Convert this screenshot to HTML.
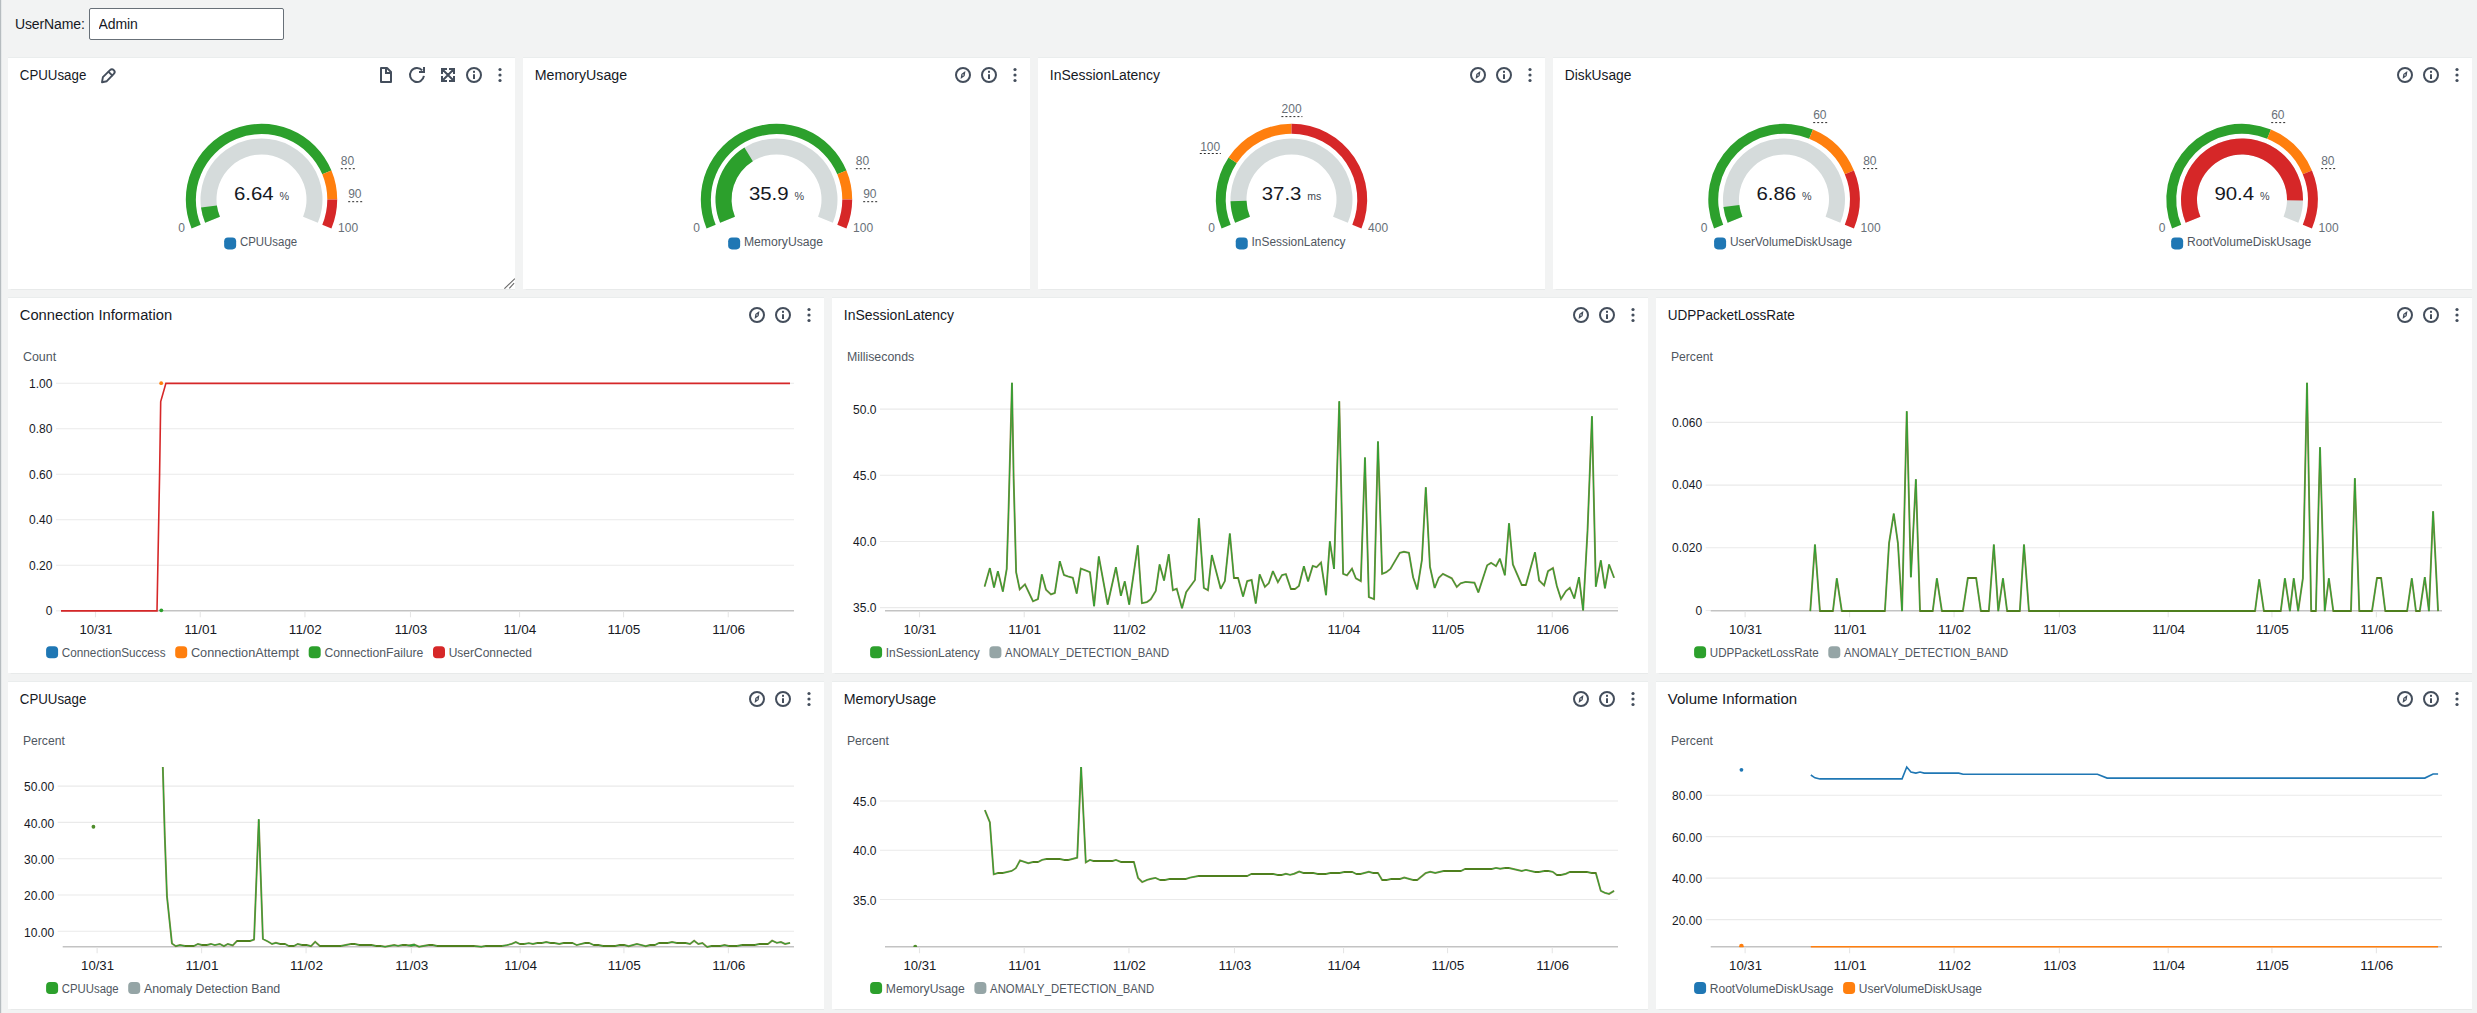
<!DOCTYPE html>
<html lang="en">
<head>
<meta charset="utf-8">
<title>Dashboard</title>
<style>
html,body{margin:0;padding:0}
body{width:2477px;height:1013px;overflow:hidden;position:relative;background:#f2f3f3;font-family:"Liberation Sans", Arial, sans-serif;color:#16191f}
.edge{position:absolute;left:0;top:0;width:2px;height:1013px;background:linear-gradient(90deg,#b3b9bd 0,#b9bfc2 1px,#e3e6e7 1px,#e9ebec 2px)}
.vars{position:absolute;left:0;top:0;height:48px;width:100%}
.vars label{position:absolute;left:15px;top:15px;font-size:14px;line-height:18px;letter-spacing:-0.12px;color:#16191f}
.vars input{position:absolute;left:89px;top:8px;width:195px;height:32px;box-sizing:border-box;border:1px solid #687078;border-radius:2px;background:#fff;
 padding:0 0 0 8.5px;font:14px "Liberation Sans", Arial, sans-serif;letter-spacing:-0.1px;color:#16191f;outline:none}
.panel{position:absolute;box-sizing:content-box;background:#fff;border-top:1px solid #eaeded;box-shadow:0 1px 1px -0.5px rgba(0,28,36,.04)}
.pv{position:absolute;left:0;top:0;display:block}
svg text{font-family:"Liberation Sans", Arial, sans-serif;white-space:pre}
</style>
</head>
<body>
<div class="edge"></div>
<header class="vars"><label for="un">UserName:</label><input id="un" type="text" value="Admin" spellcheck="false"></header>
<main>
<section class="panel" style="left:8px;top:57px;width:507px;height:231px"><svg class="pv" width="507" height="231" viewBox="8 58 507 231"><text x="19.8" y="80" font-size="14" fill="#16191f" textLength="66.5" lengthAdjust="spacingAndGlyphs">CPUUsage</text><g stroke="#444e5c" fill="none" stroke-width="1.9" stroke-linejoin="round" stroke-linecap="round"><path d="M102 82.2L102.9 77.2L110 70.1A2.6 2.6 0 0 1 113.8 73.9L106.8 81.2Z"/><path d="M108.6 71.8L112.2 75.4"/></g><g stroke="#444e5c" fill="none" stroke-width="2" stroke-linejoin="round"><path d="M381 68H387L391 72V82H381Z"/><path d="M386 68V73H391" stroke-linejoin="miter"/></g><g stroke="#444e5c" fill="none" stroke-width="2"><path d="M423.93 75.97A7 7 0 1 1 422.2 70.32"/><path d="M424 67V72H419" stroke-linejoin="miter"/></g><path d="M447 69H442V74M442 69L448 75M449 69H454V74M454 69L448 75M449 81H454V76M454 81L448 75M447 81H442V76M442 81L448 75" stroke="#444e5c" fill="none" stroke-width="2" stroke-linejoin="miter"/><g stroke="#444e5c" fill="none" stroke-width="2"><circle cx="474" cy="75" r="7"/><path d="M474 74.2V79" /></g><rect x="473" y="70.8" width="2" height="2" fill="#444e5c"/><circle cx="500" cy="69.5" r="1.6" fill="#444e5c"/><circle cx="500" cy="75" r="1.6" fill="#444e5c"/><circle cx="500" cy="80.5" r="1.6" fill="#444e5c"/><path d="M504.4 288.7L514.9 278.6M509.3 288.4L514.1 283.2" stroke="#6a6a6a" stroke-width="1.1" fill="none"/><path d="M191.56 228.47A75.7 75.7 0 0 1 331.44 170.53L322.29 174.32A65.8 65.8 0 0 0 200.71 224.68Z" fill="#2ca02c"/><path d="M331.44 170.53A75.7 75.7 0 0 1 337.2 199.5L327.3 199.5A65.8 65.8 0 0 0 322.29 174.32Z" fill="#ff7f0e"/><path d="M337.2 199.5A75.7 75.7 0 0 1 331.44 228.47L322.29 224.68A65.8 65.8 0 0 0 327.3 199.5Z" fill="#d62728"/><path d="M205.14 222.84A61 61 0 1 1 317.86 222.84L303.07 216.72A45 45 0 1 0 219.93 216.72Z" fill="#d5dbdb"/><path d="M205.14 222.84A61 61 0 0 1 201.03 207.53L216.89 205.42A45 45 0 0 0 219.93 216.72Z" fill="#2ca02c"/><text x="233.95" y="199.7" font-size="19" fill="#16191f" textLength="39.7" lengthAdjust="spacingAndGlyphs">6.64</text><text x="279.45" y="199.7" font-size="11" fill="#414750" textLength="9.6" lengthAdjust="spacingAndGlyphs">%</text><text x="185" y="232" font-size="12" fill="#687078" text-anchor="end">0</text><text x="338.1" y="232" font-size="12" fill="#687078">100</text><text x="340.8" y="164.8" font-size="12" fill="#687078">80</text><path d="M340.8 168.7h14.2" stroke="#2a2a2a" stroke-width="1" stroke-dasharray="2 2" fill="none"/><text x="348.2" y="197.8" font-size="12" fill="#687078">90</text><path d="M348.2 201.7h14.2" stroke="#2a2a2a" stroke-width="1" stroke-dasharray="2 2" fill="none"/><rect x="224.15" y="237.4" width="12" height="12" rx="3.8" fill="#1f77b4"/><text x="239.95" y="245.7" font-size="12" fill="#50575f" textLength="57.2" lengthAdjust="spacingAndGlyphs">CPUUsage</text></svg></section>
<section class="panel" style="left:523px;top:57px;width:507px;height:231px"><svg class="pv" width="507" height="231" viewBox="523 58 507 231"><text x="534.8" y="80" font-size="14" fill="#16191f" textLength="92.3" lengthAdjust="spacingAndGlyphs">MemoryUsage</text><g stroke="#444e5c" fill="none" stroke-width="2"><circle cx="963" cy="75" r="7"/></g><path d="M965.4 71.1L964.7 76L960.6 78.9L961.3 74Z" fill="#444e5c" fill-rule="evenodd"/><circle cx="963" cy="75" r="0.8" fill="#e8eaec"/><g stroke="#444e5c" fill="none" stroke-width="2"><circle cx="989" cy="75" r="7"/><path d="M989 74.2V79" /></g><rect x="988" y="70.8" width="2" height="2" fill="#444e5c"/><circle cx="1015" cy="69.5" r="1.6" fill="#444e5c"/><circle cx="1015" cy="75" r="1.6" fill="#444e5c"/><circle cx="1015" cy="80.5" r="1.6" fill="#444e5c"/><path d="M706.56 228.47A75.7 75.7 0 0 1 846.44 170.53L837.29 174.32A65.8 65.8 0 0 0 715.71 224.68Z" fill="#2ca02c"/><path d="M846.44 170.53A75.7 75.7 0 0 1 852.2 199.5L842.3 199.5A65.8 65.8 0 0 0 837.29 174.32Z" fill="#ff7f0e"/><path d="M852.2 199.5A75.7 75.7 0 0 1 846.44 228.47L837.29 224.68A65.8 65.8 0 0 0 842.3 199.5Z" fill="#d62728"/><path d="M720.14 222.84A61 61 0 1 1 832.86 222.84L818.07 216.72A45 45 0 1 0 734.93 216.72Z" fill="#d5dbdb"/><path d="M720.14 222.84A61 61 0 0 1 744.42 147.61L752.84 161.22A45 45 0 0 0 734.93 216.72Z" fill="#2ca02c"/><text x="748.95" y="199.7" font-size="19" fill="#16191f" textLength="39.7" lengthAdjust="spacingAndGlyphs">35.9</text><text x="794.45" y="199.7" font-size="11" fill="#414750" textLength="9.6" lengthAdjust="spacingAndGlyphs">%</text><text x="700" y="232" font-size="12" fill="#687078" text-anchor="end">0</text><text x="853.1" y="232" font-size="12" fill="#687078">100</text><text x="855.8" y="164.8" font-size="12" fill="#687078">80</text><path d="M855.8 168.7h14.2" stroke="#2a2a2a" stroke-width="1" stroke-dasharray="2 2" fill="none"/><text x="863.2" y="197.8" font-size="12" fill="#687078">90</text><path d="M863.2 201.7h14.2" stroke="#2a2a2a" stroke-width="1" stroke-dasharray="2 2" fill="none"/><rect x="728.15" y="237.4" width="12" height="12" rx="3.8" fill="#1f77b4"/><text x="743.95" y="245.7" font-size="12" fill="#50575f" textLength="79.2" lengthAdjust="spacingAndGlyphs">MemoryUsage</text></svg></section>
<section class="panel" style="left:1038px;top:57px;width:507px;height:231px"><svg class="pv" width="507" height="231" viewBox="1038 58 507 231"><text x="1049.8" y="80" font-size="14" fill="#16191f" textLength="110.3" lengthAdjust="spacingAndGlyphs">InSessionLatency</text><g stroke="#444e5c" fill="none" stroke-width="2"><circle cx="1478" cy="75" r="7"/></g><path d="M1480.4 71.1L1479.7 76L1475.6 78.9L1476.3 74Z" fill="#444e5c" fill-rule="evenodd"/><circle cx="1478" cy="75" r="0.8" fill="#e8eaec"/><g stroke="#444e5c" fill="none" stroke-width="2"><circle cx="1504" cy="75" r="7"/><path d="M1504 74.2V79" /></g><rect x="1503" y="70.8" width="2" height="2" fill="#444e5c"/><circle cx="1530" cy="69.5" r="1.6" fill="#444e5c"/><circle cx="1530" cy="75" r="1.6" fill="#444e5c"/><circle cx="1530" cy="80.5" r="1.6" fill="#444e5c"/><path d="M1221.56 228.47A75.7 75.7 0 0 1 1228.56 157.44L1236.79 162.94A65.8 65.8 0 0 0 1230.71 224.68Z" fill="#2ca02c"/><path d="M1228.56 157.44A75.7 75.7 0 0 1 1291.5 123.8L1291.5 133.7A65.8 65.8 0 0 0 1236.79 162.94Z" fill="#ff7f0e"/><path d="M1291.5 123.8A75.7 75.7 0 0 1 1361.44 228.47L1352.29 224.68A65.8 65.8 0 0 0 1291.5 133.7Z" fill="#d62728"/><path d="M1235.14 222.84A61 61 0 1 1 1347.86 222.84L1333.07 216.72A45 45 0 1 0 1249.93 216.72Z" fill="#d5dbdb"/><path d="M1235.14 222.84A61 61 0 0 1 1230.52 201.13L1246.52 200.7A45 45 0 0 0 1249.93 216.72Z" fill="#2ca02c"/><text x="1261.75" y="199.7" font-size="19" fill="#16191f" textLength="39.7" lengthAdjust="spacingAndGlyphs">37.3</text><text x="1307.25" y="199.7" font-size="11" fill="#414750" textLength="14" lengthAdjust="spacingAndGlyphs">ms</text><text x="1215" y="232" font-size="12" fill="#687078" text-anchor="end">0</text><text x="1368.1" y="232" font-size="12" fill="#687078">400</text><text x="1220.2" y="150.6" font-size="12" fill="#687078" text-anchor="end">100</text><path d="M1199.8 153.5h21" stroke="#2a2a2a" stroke-width="1" stroke-dasharray="2 2" fill="none"/><text x="1291.6" y="112.7" font-size="12" fill="#687078" text-anchor="middle">200</text><path d="M1281.4 116.6h21" stroke="#2a2a2a" stroke-width="1" stroke-dasharray="2 2" fill="none"/><rect x="1235.75" y="237.4" width="12" height="12" rx="3.8" fill="#1f77b4"/><text x="1251.55" y="245.7" font-size="12" fill="#50575f" textLength="94" lengthAdjust="spacingAndGlyphs">InSessionLatency</text></svg></section>
<section class="panel" style="left:1553px;top:57px;width:919px;height:231px"><svg class="pv" width="919" height="231" viewBox="1553 58 919 231"><text x="1564.8" y="80" font-size="14" fill="#16191f" textLength="66.6" lengthAdjust="spacingAndGlyphs">DiskUsage</text><g stroke="#444e5c" fill="none" stroke-width="2"><circle cx="2405" cy="75" r="7"/></g><path d="M2407.4 71.1L2406.7 76L2402.6 78.9L2403.3 74Z" fill="#444e5c" fill-rule="evenodd"/><circle cx="2405" cy="75" r="0.8" fill="#e8eaec"/><g stroke="#444e5c" fill="none" stroke-width="2"><circle cx="2431" cy="75" r="7"/><path d="M2431 74.2V79" /></g><rect x="2430" y="70.8" width="2" height="2" fill="#444e5c"/><circle cx="2457" cy="69.5" r="1.6" fill="#444e5c"/><circle cx="2457" cy="75" r="1.6" fill="#444e5c"/><circle cx="2457" cy="80.5" r="1.6" fill="#444e5c"/><path d="M1714.06 228.47A75.7 75.7 0 0 1 1812.97 129.56L1809.18 138.71A65.8 65.8 0 0 0 1723.21 224.68Z" fill="#2ca02c"/><path d="M1812.97 129.56A75.7 75.7 0 0 1 1853.94 170.53L1844.79 174.32A65.8 65.8 0 0 0 1809.18 138.71Z" fill="#ff7f0e"/><path d="M1853.94 170.53A75.7 75.7 0 0 1 1853.94 228.47L1844.79 224.68A65.8 65.8 0 0 0 1844.79 174.32Z" fill="#d62728"/><path d="M1727.64 222.84A61 61 0 1 1 1840.36 222.84L1825.57 216.72A45 45 0 1 0 1742.43 216.72Z" fill="#d5dbdb"/><path d="M1727.64 222.84A61 61 0 0 1 1723.46 207L1739.34 205.03A45 45 0 0 0 1742.43 216.72Z" fill="#2ca02c"/><text x="1756.45" y="199.7" font-size="19" fill="#16191f" textLength="39.7" lengthAdjust="spacingAndGlyphs">6.86</text><text x="1801.95" y="199.7" font-size="11" fill="#414750" textLength="9.6" lengthAdjust="spacingAndGlyphs">%</text><text x="1707.5" y="232" font-size="12" fill="#687078" text-anchor="end">0</text><text x="1860.6" y="232" font-size="12" fill="#687078">100</text><text x="1813.2" y="118.7" font-size="12" fill="#687078">60</text><path d="M1813.2 122.6h14.2" stroke="#2a2a2a" stroke-width="1" stroke-dasharray="2 2" fill="none"/><text x="1863.2" y="164.7" font-size="12" fill="#687078">80</text><path d="M1863.2 168.6h14.2" stroke="#2a2a2a" stroke-width="1" stroke-dasharray="2 2" fill="none"/><rect x="1714.1" y="237.4" width="12" height="12" rx="3.8" fill="#1f77b4"/><text x="1729.9" y="245.7" font-size="12" fill="#50575f" textLength="122.3" lengthAdjust="spacingAndGlyphs">UserVolumeDiskUsage</text><path d="M2172.06 228.47A75.7 75.7 0 0 1 2270.97 129.56L2267.18 138.71A65.8 65.8 0 0 0 2181.21 224.68Z" fill="#2ca02c"/><path d="M2270.97 129.56A75.7 75.7 0 0 1 2311.94 170.53L2302.79 174.32A65.8 65.8 0 0 0 2267.18 138.71Z" fill="#ff7f0e"/><path d="M2311.94 170.53A75.7 75.7 0 0 1 2311.94 228.47L2302.79 224.68A65.8 65.8 0 0 0 2302.79 174.32Z" fill="#d62728"/><path d="M2185.64 222.84A61 61 0 1 1 2298.36 222.84L2283.57 216.72A45 45 0 1 0 2200.43 216.72Z" fill="#d5dbdb"/><path d="M2185.64 222.84A61 61 0 1 1 2302.99 200.46L2286.99 200.21A45 45 0 1 0 2200.43 216.72Z" fill="#d62728"/><text x="2214.45" y="199.7" font-size="19" fill="#16191f" textLength="39.7" lengthAdjust="spacingAndGlyphs">90.4</text><text x="2259.95" y="199.7" font-size="11" fill="#414750" textLength="9.6" lengthAdjust="spacingAndGlyphs">%</text><text x="2165.5" y="232" font-size="12" fill="#687078" text-anchor="end">0</text><text x="2318.6" y="232" font-size="12" fill="#687078">100</text><text x="2271.2" y="118.7" font-size="12" fill="#687078">60</text><path d="M2271.2 122.6h14.2" stroke="#2a2a2a" stroke-width="1" stroke-dasharray="2 2" fill="none"/><text x="2321.2" y="164.7" font-size="12" fill="#687078">80</text><path d="M2321.2 168.6h14.2" stroke="#2a2a2a" stroke-width="1" stroke-dasharray="2 2" fill="none"/><rect x="2171.15" y="237.4" width="12" height="12" rx="3.8" fill="#1f77b4"/><text x="2186.95" y="245.7" font-size="12" fill="#50575f" textLength="124.2" lengthAdjust="spacingAndGlyphs">RootVolumeDiskUsage</text></svg></section>
<section class="panel" style="left:8px;top:297px;width:816px;height:375px"><svg class="pv" width="816" height="375" viewBox="8 298 816 375"><text x="19.8" y="320" font-size="14" fill="#16191f" textLength="152.3" lengthAdjust="spacingAndGlyphs">Connection Information</text><g stroke="#444e5c" fill="none" stroke-width="2"><circle cx="757" cy="315" r="7"/></g><path d="M759.4 311.1L758.7 316L754.6 318.9L755.3 314Z" fill="#444e5c" fill-rule="evenodd"/><circle cx="757" cy="315" r="0.8" fill="#e8eaec"/><g stroke="#444e5c" fill="none" stroke-width="2"><circle cx="783" cy="315" r="7"/><path d="M783 314.2V319" /></g><rect x="782" y="310.8" width="2" height="2" fill="#444e5c"/><circle cx="809" cy="309.5" r="1.6" fill="#444e5c"/><circle cx="809" cy="315" r="1.6" fill="#444e5c"/><circle cx="809" cy="320.5" r="1.6" fill="#444e5c"/><text x="22.9" y="361" font-size="12" fill="#50575f" textLength="33.3" lengthAdjust="spacingAndGlyphs">Count</text><path d="M56 383.3H794" stroke="#eaeaea" stroke-width="1.1"/><text x="52.4" y="387.6" font-size="12" fill="#16191f" text-anchor="end">1.00</text><path d="M56 428.8H794" stroke="#eaeaea" stroke-width="1.1"/><text x="52.4" y="433.1" font-size="12" fill="#16191f" text-anchor="end">0.80</text><path d="M56 474.3H794" stroke="#eaeaea" stroke-width="1.1"/><text x="52.4" y="478.6" font-size="12" fill="#16191f" text-anchor="end">0.60</text><path d="M56 519.8H794" stroke="#eaeaea" stroke-width="1.1"/><text x="52.4" y="524.1" font-size="12" fill="#16191f" text-anchor="end">0.40</text><path d="M56 565.3H794" stroke="#eaeaea" stroke-width="1.1"/><text x="52.4" y="569.6" font-size="12" fill="#16191f" text-anchor="end">0.20</text><path d="M56 610.8H61" stroke="#eaeaea" stroke-width="1.1"/><text x="52.4" y="615.1" font-size="12" fill="#16191f" text-anchor="end">0</text><path d="M61 610.8H794" stroke="#c3c3c3" stroke-width="1.6"/><path d="M95.51 611.6V617.3" stroke="#e6e6e6" stroke-width="1.1"/><text x="95.91" y="633.9" font-size="12" fill="#16191f" text-anchor="middle" textLength="32.9" lengthAdjust="spacingAndGlyphs">10/31</text><path d="M200.23 611.6V617.3" stroke="#e6e6e6" stroke-width="1.1"/><text x="200.63" y="633.9" font-size="12" fill="#16191f" text-anchor="middle" textLength="32.9" lengthAdjust="spacingAndGlyphs">11/01</text><path d="M304.94 611.6V617.3" stroke="#e6e6e6" stroke-width="1.1"/><text x="305.34" y="633.9" font-size="12" fill="#16191f" text-anchor="middle" textLength="32.9" lengthAdjust="spacingAndGlyphs">11/02</text><path d="M410.48 611.6V617.3" stroke="#e6e6e6" stroke-width="1.1"/><text x="410.88" y="633.9" font-size="12" fill="#16191f" text-anchor="middle" textLength="32.9" lengthAdjust="spacingAndGlyphs">11/03</text><path d="M519.56 611.6V617.3" stroke="#e6e6e6" stroke-width="1.1"/><text x="519.96" y="633.9" font-size="12" fill="#16191f" text-anchor="middle" textLength="32.9" lengthAdjust="spacingAndGlyphs">11/04</text><path d="M623.53 611.6V617.3" stroke="#e6e6e6" stroke-width="1.1"/><text x="623.93" y="633.9" font-size="12" fill="#16191f" text-anchor="middle" textLength="32.9" lengthAdjust="spacingAndGlyphs">11/05</text><path d="M728.25 611.6V617.3" stroke="#e6e6e6" stroke-width="1.1"/><text x="728.65" y="633.9" font-size="12" fill="#16191f" text-anchor="middle" textLength="32.9" lengthAdjust="spacingAndGlyphs">11/06</text><path d="M61 610.9L157 610.9L159.6 474L160.7 401.5L165.9 383.4L790 383.4" fill="none" stroke="#d62728" stroke-width="1.6" stroke-linejoin="miter" stroke-miterlimit="2.5"/><circle cx="161.2" cy="383.2" r="1.9" fill="#ff7f0e"/><circle cx="161.3" cy="610.3" r="1.9" fill="#2ca02c"/><rect x="46.1" y="646.2" width="12" height="12" rx="3.8" fill="#1f77b4"/><text x="61.8" y="656.8" font-size="12" fill="#50575f" textLength="103.8" lengthAdjust="spacingAndGlyphs">ConnectionSuccess</text><rect x="175.2" y="646.2" width="12" height="12" rx="3.8" fill="#ff7f0e"/><text x="190.9" y="656.8" font-size="12" fill="#50575f" textLength="108.2" lengthAdjust="spacingAndGlyphs">ConnectionAttempt</text><rect x="308.7" y="646.2" width="12" height="12" rx="3.8" fill="#2ca02c"/><text x="324.4" y="656.8" font-size="12" fill="#50575f" textLength="99" lengthAdjust="spacingAndGlyphs">ConnectionFailure</text><rect x="433" y="646.2" width="12" height="12" rx="3.8" fill="#d62728"/><text x="448.7" y="656.8" font-size="12" fill="#50575f" textLength="83.3" lengthAdjust="spacingAndGlyphs">UserConnected</text></svg></section>
<section class="panel" style="left:832px;top:297px;width:816px;height:375px"><svg class="pv" width="816" height="375" viewBox="832 298 816 375"><text x="843.8" y="320" font-size="14" fill="#16191f" textLength="110.3" lengthAdjust="spacingAndGlyphs">InSessionLatency</text><g stroke="#444e5c" fill="none" stroke-width="2"><circle cx="1581" cy="315" r="7"/></g><path d="M1583.4 311.1L1582.7 316L1578.6 318.9L1579.3 314Z" fill="#444e5c" fill-rule="evenodd"/><circle cx="1581" cy="315" r="0.8" fill="#e8eaec"/><g stroke="#444e5c" fill="none" stroke-width="2"><circle cx="1607" cy="315" r="7"/><path d="M1607 314.2V319" /></g><rect x="1606" y="310.8" width="2" height="2" fill="#444e5c"/><circle cx="1633" cy="309.5" r="1.6" fill="#444e5c"/><circle cx="1633" cy="315" r="1.6" fill="#444e5c"/><circle cx="1633" cy="320.5" r="1.6" fill="#444e5c"/><text x="846.9" y="361" font-size="12" fill="#50575f" textLength="67.3" lengthAdjust="spacingAndGlyphs">Milliseconds</text><path d="M880 409.1H1618" stroke="#eaeaea" stroke-width="1.1"/><text x="876.4" y="413.9" font-size="12" fill="#16191f" text-anchor="end">50.0</text><path d="M880 475.3H1618" stroke="#eaeaea" stroke-width="1.1"/><text x="876.4" y="480.1" font-size="12" fill="#16191f" text-anchor="end">45.0</text><path d="M880 541.5H1618" stroke="#eaeaea" stroke-width="1.1"/><text x="876.4" y="546.3" font-size="12" fill="#16191f" text-anchor="end">40.0</text><path d="M880 607.6H1618" stroke="#eaeaea" stroke-width="1.1"/><text x="876.4" y="612.4" font-size="12" fill="#16191f" text-anchor="end">35.0</text><path d="M885 610.8H1618" stroke="#c3c3c3" stroke-width="1.6"/><path d="M919.51 611.6V617.3" stroke="#e6e6e6" stroke-width="1.1"/><text x="919.91" y="633.9" font-size="12" fill="#16191f" text-anchor="middle" textLength="32.9" lengthAdjust="spacingAndGlyphs">10/31</text><path d="M1024.23 611.6V617.3" stroke="#e6e6e6" stroke-width="1.1"/><text x="1024.63" y="633.9" font-size="12" fill="#16191f" text-anchor="middle" textLength="32.9" lengthAdjust="spacingAndGlyphs">11/01</text><path d="M1128.94 611.6V617.3" stroke="#e6e6e6" stroke-width="1.1"/><text x="1129.34" y="633.9" font-size="12" fill="#16191f" text-anchor="middle" textLength="32.9" lengthAdjust="spacingAndGlyphs">11/02</text><path d="M1234.48 611.6V617.3" stroke="#e6e6e6" stroke-width="1.1"/><text x="1234.88" y="633.9" font-size="12" fill="#16191f" text-anchor="middle" textLength="32.9" lengthAdjust="spacingAndGlyphs">11/03</text><path d="M1343.56 611.6V617.3" stroke="#e6e6e6" stroke-width="1.1"/><text x="1343.96" y="633.9" font-size="12" fill="#16191f" text-anchor="middle" textLength="32.9" lengthAdjust="spacingAndGlyphs">11/04</text><path d="M1447.53 611.6V617.3" stroke="#e6e6e6" stroke-width="1.1"/><text x="1447.93" y="633.9" font-size="12" fill="#16191f" text-anchor="middle" textLength="32.9" lengthAdjust="spacingAndGlyphs">11/05</text><path d="M1552.25 611.6V617.3" stroke="#e6e6e6" stroke-width="1.1"/><text x="1552.65" y="633.9" font-size="12" fill="#16191f" text-anchor="middle" textLength="32.9" lengthAdjust="spacingAndGlyphs">11/06</text><path d="M984.61 586.61L989.86 568.08L994.01 587.44L997.88 571.13L1002.86 591.58L1006.73 568.91L1008.39 516.94L1011.98 382.85L1013.64 478.23L1016.13 572.23L1019.72 589.37L1024.97 584.4L1032.99 601.26L1037.97 599.05L1041.84 574.44L1045.99 589.65L1050.96 594.35L1054.83 592.97L1059.81 561.17L1063.96 575L1067.83 576.38L1072.8 577.76L1076.67 593.52L1080.82 568.64L1085.52 570.3L1089.94 572.23L1094.09 606.24L1098.79 556.47L1107.64 604.58L1115.93 567.26L1120.91 595.73L1124.78 581.36L1129.2 604.58L1137.77 545.41L1141.92 603.2L1146.9 602.09L1150.77 599.33L1155.74 591.03L1159.61 564.49L1164.04 580.53L1168.74 554.26L1172.88 590.2L1176.75 588.82L1182.01 608.17L1186.15 592.14L1195 579.97L1198.87 518.32L1203.85 587.99L1207.99 590.2L1211.87 555.09L1220.71 588.82L1224.86 581.08L1229.84 533.53L1233.94 578L1238.08 578L1243.06 596.56L1247.21 581.08L1251.63 579.97L1255.78 603.47L1259.65 574.44L1264.9 586.88L1268.77 583.29L1272.92 571.13L1277.89 582.18L1282.04 575L1285.91 574.17L1290.89 589L1295.03 589L1298.9 586.06L1303.88 566.15L1308.03 581.36L1312.73 565.87L1316.6 567.26L1321.02 562.56L1326 595.18L1329.87 541.27L1334.02 568.91L1339.27 401.38L1343.14 573.89L1347.01 575.27L1351.99 568.64L1355.86 578.31L1360.83 581.08L1364.98 457.5L1368.85 597.11L1374.1 599.05L1377.97 441.46L1382.12 573.89L1386.27 572.23L1390.42 568.91L1399.82 552.88L1403.96 551.77L1408.94 552.88L1413.09 577.21L1417.23 589.37L1421.93 559.79L1425.8 487.36L1429.95 566.7L1434.65 587.99L1438.8 577.76L1442.94 573.89L1451.79 578.31L1456.77 586.88L1460.64 583.29L1465.61 581.91L1474.46 582.74L1478.33 592.41L1487.18 565.32L1491.05 562.83L1496.03 566.15L1499.9 558.69L1504.87 575.27L1509.02 523.3L1512.89 564.49L1521.74 585L1525.88 585L1535.01 552.33L1539.15 580.53L1544.13 585.5L1548 571.13L1552.98 568.08L1556.85 586.06L1561 599.05L1565.97 591.03L1569.84 587.71L1574.27 598.5L1578.97 577.21L1583.11 610.38L1587.54 530.76L1591.96 416.3L1595.83 586.61L1600.81 560.34L1604.95 588.27L1609.1 564.49L1614.08 577.76" fill="none" stroke="#7d7426" stroke-width="1.9" stroke-linejoin="miter" stroke-miterlimit="2.5" stroke-opacity="0.85"/><path d="M984.61 586.61L989.86 568.08L994.01 587.44L997.88 571.13L1002.86 591.58L1006.73 568.91L1008.39 516.94L1011.98 382.85L1013.64 478.23L1016.13 572.23L1019.72 589.37L1024.97 584.4L1032.99 601.26L1037.97 599.05L1041.84 574.44L1045.99 589.65L1050.96 594.35L1054.83 592.97L1059.81 561.17L1063.96 575L1067.83 576.38L1072.8 577.76L1076.67 593.52L1080.82 568.64L1085.52 570.3L1089.94 572.23L1094.09 606.24L1098.79 556.47L1107.64 604.58L1115.93 567.26L1120.91 595.73L1124.78 581.36L1129.2 604.58L1137.77 545.41L1141.92 603.2L1146.9 602.09L1150.77 599.33L1155.74 591.03L1159.61 564.49L1164.04 580.53L1168.74 554.26L1172.88 590.2L1176.75 588.82L1182.01 608.17L1186.15 592.14L1195 579.97L1198.87 518.32L1203.85 587.99L1207.99 590.2L1211.87 555.09L1220.71 588.82L1224.86 581.08L1229.84 533.53L1233.94 578L1238.08 578L1243.06 596.56L1247.21 581.08L1251.63 579.97L1255.78 603.47L1259.65 574.44L1264.9 586.88L1268.77 583.29L1272.92 571.13L1277.89 582.18L1282.04 575L1285.91 574.17L1290.89 589L1295.03 589L1298.9 586.06L1303.88 566.15L1308.03 581.36L1312.73 565.87L1316.6 567.26L1321.02 562.56L1326 595.18L1329.87 541.27L1334.02 568.91L1339.27 401.38L1343.14 573.89L1347.01 575.27L1351.99 568.64L1355.86 578.31L1360.83 581.08L1364.98 457.5L1368.85 597.11L1374.1 599.05L1377.97 441.46L1382.12 573.89L1386.27 572.23L1390.42 568.91L1399.82 552.88L1403.96 551.77L1408.94 552.88L1413.09 577.21L1417.23 589.37L1421.93 559.79L1425.8 487.36L1429.95 566.7L1434.65 587.99L1438.8 577.76L1442.94 573.89L1451.79 578.31L1456.77 586.88L1460.64 583.29L1465.61 581.91L1474.46 582.74L1478.33 592.41L1487.18 565.32L1491.05 562.83L1496.03 566.15L1499.9 558.69L1504.87 575.27L1509.02 523.3L1512.89 564.49L1521.74 585L1525.88 585L1535.01 552.33L1539.15 580.53L1544.13 585.5L1548 571.13L1552.98 568.08L1556.85 586.06L1561 599.05L1565.97 591.03L1569.84 587.71L1574.27 598.5L1578.97 577.21L1583.11 610.38L1587.54 530.76L1591.96 416.3L1595.83 586.61L1600.81 560.34L1604.95 588.27L1609.1 564.49L1614.08 577.76" fill="none" stroke="#2ba335" stroke-width="1.0" stroke-linejoin="miter" stroke-miterlimit="2.5"/><path d="M1233.94 578L1238.08 578M1290.89 589L1295.03 589M1521.74 585L1525.88 585" fill="none" stroke="#4f7f1e" stroke-width="2" stroke-linejoin="round"/><rect x="870.1" y="646.2" width="12" height="12" rx="3.8" fill="#2ca02c"/><text x="885.8" y="656.8" font-size="12" fill="#50575f" textLength="94" lengthAdjust="spacingAndGlyphs">InSessionLatency</text><rect x="989.4" y="646.2" width="12" height="12" rx="3.8" fill="#95a5a6"/><text x="1005.1" y="656.8" font-size="12" fill="#50575f" textLength="164.1" lengthAdjust="spacingAndGlyphs">ANOMALY_DETECTION_BAND</text></svg></section>
<section class="panel" style="left:1656px;top:297px;width:816px;height:375px"><svg class="pv" width="816" height="375" viewBox="1656 298 816 375"><text x="1667.8" y="320" font-size="14" fill="#16191f" textLength="127.1" lengthAdjust="spacingAndGlyphs">UDPPacketLossRate</text><g stroke="#444e5c" fill="none" stroke-width="2"><circle cx="2405" cy="315" r="7"/></g><path d="M2407.4 311.1L2406.7 316L2402.6 318.9L2403.3 314Z" fill="#444e5c" fill-rule="evenodd"/><circle cx="2405" cy="315" r="0.8" fill="#e8eaec"/><g stroke="#444e5c" fill="none" stroke-width="2"><circle cx="2431" cy="315" r="7"/><path d="M2431 314.2V319" /></g><rect x="2430" y="310.8" width="2" height="2" fill="#444e5c"/><circle cx="2457" cy="309.5" r="1.6" fill="#444e5c"/><circle cx="2457" cy="315" r="1.6" fill="#444e5c"/><circle cx="2457" cy="320.5" r="1.6" fill="#444e5c"/><text x="1670.9" y="361" font-size="12" fill="#50575f" textLength="41.9" lengthAdjust="spacingAndGlyphs">Percent</text><path d="M1705.7 422.4H2442" stroke="#eaeaea" stroke-width="1.1"/><text x="1702.1" y="426.7" font-size="12" fill="#16191f" text-anchor="end">0.060</text><path d="M1705.7 485.1H2442" stroke="#eaeaea" stroke-width="1.1"/><text x="1702.1" y="489.4" font-size="12" fill="#16191f" text-anchor="end">0.040</text><path d="M1705.7 547.8H2442" stroke="#eaeaea" stroke-width="1.1"/><text x="1702.1" y="552.1" font-size="12" fill="#16191f" text-anchor="end">0.020</text><path d="M1705.7 610.5H1710.7" stroke="#eaeaea" stroke-width="1.1"/><text x="1702.1" y="614.8" font-size="12" fill="#16191f" text-anchor="end">0</text><path d="M1710.7 610.8H2442" stroke="#c3c3c3" stroke-width="1.6"/><path d="M1745.13 611.6V617.3" stroke="#e6e6e6" stroke-width="1.1"/><text x="1745.53" y="633.9" font-size="12" fill="#16191f" text-anchor="middle" textLength="32.9" lengthAdjust="spacingAndGlyphs">10/31</text><path d="M1849.6 611.6V617.3" stroke="#e6e6e6" stroke-width="1.1"/><text x="1850" y="633.9" font-size="12" fill="#16191f" text-anchor="middle" textLength="32.9" lengthAdjust="spacingAndGlyphs">11/01</text><path d="M1954.07 611.6V617.3" stroke="#e6e6e6" stroke-width="1.1"/><text x="1954.47" y="633.9" font-size="12" fill="#16191f" text-anchor="middle" textLength="32.9" lengthAdjust="spacingAndGlyphs">11/02</text><path d="M2059.37 611.6V617.3" stroke="#e6e6e6" stroke-width="1.1"/><text x="2059.77" y="633.9" font-size="12" fill="#16191f" text-anchor="middle" textLength="32.9" lengthAdjust="spacingAndGlyphs">11/03</text><path d="M2168.2 611.6V617.3" stroke="#e6e6e6" stroke-width="1.1"/><text x="2168.6" y="633.9" font-size="12" fill="#16191f" text-anchor="middle" textLength="32.9" lengthAdjust="spacingAndGlyphs">11/04</text><path d="M2271.93 611.6V617.3" stroke="#e6e6e6" stroke-width="1.1"/><text x="2272.33" y="633.9" font-size="12" fill="#16191f" text-anchor="middle" textLength="32.9" lengthAdjust="spacingAndGlyphs">11/05</text><path d="M2376.4 611.6V617.3" stroke="#e6e6e6" stroke-width="1.1"/><text x="2376.8" y="633.9" font-size="12" fill="#16191f" text-anchor="middle" textLength="32.9" lengthAdjust="spacingAndGlyphs">11/06</text><path d="M1810.27 611.1L1814.97 544.59L1819.94 611L1832.94 611L1836.81 578.31L1841.79 611L1884.91 611L1889.06 543.2L1893.76 513.62L1897.91 543.2L1902.06 611.1L1906.76 411.33L1910.9 577.21L1915.88 479.34L1920.03 611L1932.74 611L1936.89 578.31L1941.87 611L1962.88 611L1967.85 578L1976.15 578L1980.85 611L1988.87 611L1993.84 544.59L1998.27 611.1L2002.97 578.31L2007.11 611L2019.83 611L2023.98 544.59L2028.95 611L2255.06 611L2259.2 579.42L2263.9 611L2280.77 611L2284.91 578.31L2289.89 611.1L2293.76 578.31L2298.18 611.1L2302.88 578.31L2307.03 382.85L2311.18 611L2315.88 611L2320.03 447.27L2324.73 611.1L2328.87 578.31L2333.3 611L2350.99 611L2354.86 478.23L2359.28 611L2372 611L2376.98 578L2381.12 578L2385.27 611L2407.11 611L2411.81 578.31L2415.96 611L2419.83 611L2424.81 577.21L2428.95 611.1L2433.1 511.41L2438.08 611.1" fill="none" stroke="#7d7426" stroke-width="1.9" stroke-linejoin="miter" stroke-miterlimit="2.5" stroke-opacity="0.85"/><path d="M1810.27 611.1L1814.97 544.59L1819.94 611L1832.94 611L1836.81 578.31L1841.79 611L1884.91 611L1889.06 543.2L1893.76 513.62L1897.91 543.2L1902.06 611.1L1906.76 411.33L1910.9 577.21L1915.88 479.34L1920.03 611L1932.74 611L1936.89 578.31L1941.87 611L1962.88 611L1967.85 578L1976.15 578L1980.85 611L1988.87 611L1993.84 544.59L1998.27 611.1L2002.97 578.31L2007.11 611L2019.83 611L2023.98 544.59L2028.95 611L2255.06 611L2259.2 579.42L2263.9 611L2280.77 611L2284.91 578.31L2289.89 611.1L2293.76 578.31L2298.18 611.1L2302.88 578.31L2307.03 382.85L2311.18 611L2315.88 611L2320.03 447.27L2324.73 611.1L2328.87 578.31L2333.3 611L2350.99 611L2354.86 478.23L2359.28 611L2372 611L2376.98 578L2381.12 578L2385.27 611L2407.11 611L2411.81 578.31L2415.96 611L2419.83 611L2424.81 577.21L2428.95 611.1L2433.1 511.41L2438.08 611.1" fill="none" stroke="#2ba335" stroke-width="1.0" stroke-linejoin="miter" stroke-miterlimit="2.5"/><path d="M1819.94 611L1832.94 611M1841.79 611L1884.91 611M1920.03 611L1932.74 611M1941.87 611L1962.88 611M1967.85 578L1976.15 578M1980.85 611L1988.87 611M2007.11 611L2019.83 611M2028.95 611L2255.06 611M2263.9 611L2280.77 611M2311.18 611L2315.88 611M2333.3 611L2350.99 611M2359.28 611L2372 611M2376.98 578L2381.12 578M2385.27 611L2407.11 611M2415.96 611L2419.83 611" fill="none" stroke="#4f7f1e" stroke-width="2" stroke-linejoin="round"/><rect x="1694.1" y="646.2" width="12" height="12" rx="3.8" fill="#2ca02c"/><text x="1709.8" y="656.8" font-size="12" fill="#50575f" textLength="108.9" lengthAdjust="spacingAndGlyphs">UDPPacketLossRate</text><rect x="1828.3" y="646.2" width="12" height="12" rx="3.8" fill="#95a5a6"/><text x="1844" y="656.8" font-size="12" fill="#50575f" textLength="164.1" lengthAdjust="spacingAndGlyphs">ANOMALY_DETECTION_BAND</text></svg></section>
<section class="panel" style="left:8px;top:681px;width:816px;height:327px"><svg class="pv" width="816" height="327" viewBox="8 682 816 327"><text x="19.8" y="704" font-size="14" fill="#16191f" textLength="66.5" lengthAdjust="spacingAndGlyphs">CPUUsage</text><g stroke="#444e5c" fill="none" stroke-width="2"><circle cx="757" cy="699" r="7"/></g><path d="M759.4 695.1L758.7 700L754.6 702.9L755.3 698Z" fill="#444e5c" fill-rule="evenodd"/><circle cx="757" cy="699" r="0.8" fill="#e8eaec"/><g stroke="#444e5c" fill="none" stroke-width="2"><circle cx="783" cy="699" r="7"/><path d="M783 698.2V703" /></g><rect x="782" y="694.8" width="2" height="2" fill="#444e5c"/><circle cx="809" cy="693.5" r="1.6" fill="#444e5c"/><circle cx="809" cy="699" r="1.6" fill="#444e5c"/><circle cx="809" cy="704.5" r="1.6" fill="#444e5c"/><text x="22.9" y="745" font-size="12" fill="#50575f" textLength="41.9" lengthAdjust="spacingAndGlyphs">Percent</text><path d="M57.7 786.1H794" stroke="#eaeaea" stroke-width="1.1"/><text x="54.1" y="791.3" font-size="12" fill="#16191f" text-anchor="end">50.00</text><path d="M57.7 822.4H794" stroke="#eaeaea" stroke-width="1.1"/><text x="54.1" y="827.6" font-size="12" fill="#16191f" text-anchor="end">40.00</text><path d="M57.7 858.7H794" stroke="#eaeaea" stroke-width="1.1"/><text x="54.1" y="863.9" font-size="12" fill="#16191f" text-anchor="end">30.00</text><path d="M57.7 895H794" stroke="#eaeaea" stroke-width="1.1"/><text x="54.1" y="900.2" font-size="12" fill="#16191f" text-anchor="end">20.00</text><path d="M57.7 931.3H794" stroke="#eaeaea" stroke-width="1.1"/><text x="54.1" y="936.5" font-size="12" fill="#16191f" text-anchor="end">10.00</text><path d="M62.7 946.7H794" stroke="#c3c3c3" stroke-width="1.6"/><path d="M97.13 947.5V953.2" stroke="#e6e6e6" stroke-width="1.1"/><text x="97.53" y="969.8" font-size="12" fill="#16191f" text-anchor="middle" textLength="32.9" lengthAdjust="spacingAndGlyphs">10/31</text><path d="M201.6 947.5V953.2" stroke="#e6e6e6" stroke-width="1.1"/><text x="202" y="969.8" font-size="12" fill="#16191f" text-anchor="middle" textLength="32.9" lengthAdjust="spacingAndGlyphs">11/01</text><path d="M306.07 947.5V953.2" stroke="#e6e6e6" stroke-width="1.1"/><text x="306.47" y="969.8" font-size="12" fill="#16191f" text-anchor="middle" textLength="32.9" lengthAdjust="spacingAndGlyphs">11/02</text><path d="M411.37 947.5V953.2" stroke="#e6e6e6" stroke-width="1.1"/><text x="411.77" y="969.8" font-size="12" fill="#16191f" text-anchor="middle" textLength="32.9" lengthAdjust="spacingAndGlyphs">11/03</text><path d="M520.2 947.5V953.2" stroke="#e6e6e6" stroke-width="1.1"/><text x="520.6" y="969.8" font-size="12" fill="#16191f" text-anchor="middle" textLength="32.9" lengthAdjust="spacingAndGlyphs">11/04</text><path d="M623.93 947.5V953.2" stroke="#e6e6e6" stroke-width="1.1"/><text x="624.33" y="969.8" font-size="12" fill="#16191f" text-anchor="middle" textLength="32.9" lengthAdjust="spacingAndGlyphs">11/05</text><path d="M728.4 947.5V953.2" stroke="#e6e6e6" stroke-width="1.1"/><text x="728.8" y="969.8" font-size="12" fill="#16191f" text-anchor="middle" textLength="32.9" lengthAdjust="spacingAndGlyphs">11/06</text><path d="M162.82 767.02L164.76 835.59L166.97 896.41L171.94 943.41L175.82 946.17L179.96 945.07L184.94 946L193.79 946L197.93 943.96L201.8 945L207.06 945L210.93 943.96L214.8 945.07L219.77 943.96L223.92 946.17L227.79 943.96L232.77 945.34L236.91 941L250.18 941L254.06 939.54L258.76 819.28L262.9 938.99L267.88 941.47L272.03 943.96L275.9 942.86L280.04 944L285.02 944L288.89 946L293.87 946L297.74 943.96L301.88 945L306.86 945L311.01 946.17L315.15 941.75L319.85 946L340.87 946L350.82 944L354.97 944L359.11 945L371.83 945L375.98 946L380.95 946L385.1 946.73L394.22 945.07L398.09 945.9L402.24 945L406.39 945L411.09 945.9L414.96 945.07L408 945.62L414.08 944.51L419.06 946.73L428.73 945L432.88 945L437.03 946L474.35 946L481.26 946.73L485.41 946L502 946L506.98 945.07L511.67 943.96L515.82 942.03L519.97 944L524.12 944L528.82 943.13L532.96 943.96L537.11 943L542.09 943L546.23 942.03L550.38 943L554.53 943L559.23 943.96L563.37 943L572.5 943L576.64 945.07L584.94 943L589.09 943L593.79 945L598.76 945L602.91 946L615.35 946L619.5 945L624.47 945L628.62 946.17L636.91 943.96L641.61 945.07L645.76 946.17L649.91 945L654.88 945L659.03 943L667.88 943L672.03 942.03L676.73 943L685.85 943L690 943.96L694.14 940.64L698.29 943.96L702.44 943.13L707.14 947L711.28 946L720.41 946L724.55 945.07L728.7 946L737 946L741.97 945L754.97 945L759.11 944L767.96 944L772.11 940.64L776.81 942.86L780.95 942.03L785.1 943.96L790.08 942.86" fill="none" stroke="#7d7426" stroke-width="1.9" stroke-linejoin="miter" stroke-miterlimit="2.5" stroke-opacity="0.85"/><path d="M162.82 767.02L164.76 835.59L166.97 896.41L171.94 943.41L175.82 946.17L179.96 945.07L184.94 946L193.79 946L197.93 943.96L201.8 945L207.06 945L210.93 943.96L214.8 945.07L219.77 943.96L223.92 946.17L227.79 943.96L232.77 945.34L236.91 941L250.18 941L254.06 939.54L258.76 819.28L262.9 938.99L267.88 941.47L272.03 943.96L275.9 942.86L280.04 944L285.02 944L288.89 946L293.87 946L297.74 943.96L301.88 945L306.86 945L311.01 946.17L315.15 941.75L319.85 946L340.87 946L350.82 944L354.97 944L359.11 945L371.83 945L375.98 946L380.95 946L385.1 946.73L394.22 945.07L398.09 945.9L402.24 945L406.39 945L411.09 945.9L414.96 945.07L408 945.62L414.08 944.51L419.06 946.73L428.73 945L432.88 945L437.03 946L474.35 946L481.26 946.73L485.41 946L502 946L506.98 945.07L511.67 943.96L515.82 942.03L519.97 944L524.12 944L528.82 943.13L532.96 943.96L537.11 943L542.09 943L546.23 942.03L550.38 943L554.53 943L559.23 943.96L563.37 943L572.5 943L576.64 945.07L584.94 943L589.09 943L593.79 945L598.76 945L602.91 946L615.35 946L619.5 945L624.47 945L628.62 946.17L636.91 943.96L641.61 945.07L645.76 946.17L649.91 945L654.88 945L659.03 943L667.88 943L672.03 942.03L676.73 943L685.85 943L690 943.96L694.14 940.64L698.29 943.96L702.44 943.13L707.14 947L711.28 946L720.41 946L724.55 945.07L728.7 946L737 946L741.97 945L754.97 945L759.11 944L767.96 944L772.11 940.64L776.81 942.86L780.95 942.03L785.1 943.96L790.08 942.86" fill="none" stroke="#2ba335" stroke-width="1.0" stroke-linejoin="miter" stroke-miterlimit="2.5"/><path d="M184.94 946L193.79 946M201.8 945L207.06 945M236.91 941L250.18 941M280.04 944L285.02 944M288.89 946L293.87 946M301.88 945L306.86 945M319.85 946L340.87 946M350.82 944L354.97 944M359.11 945L371.83 945M375.98 946L380.95 946M402.24 945L406.39 945M428.73 945L432.88 945M437.03 946L474.35 946M485.41 946L502 946M519.97 944L524.12 944M537.11 943L542.09 943M550.38 943L554.53 943M563.37 943L572.5 943M584.94 943L589.09 943M593.79 945L598.76 945M602.91 946L615.35 946M619.5 945L624.47 945M649.91 945L654.88 945M659.03 943L667.88 943M676.73 943L685.85 943M711.28 946L720.41 946M728.7 946L737 946M741.97 945L754.97 945M759.11 944L767.96 944" fill="none" stroke="#4f7f1e" stroke-width="2" stroke-linejoin="round"/><circle cx="93.43" cy="826.74" r="1.9" fill="#4e8c2b"/><rect x="46.1" y="982.1" width="12" height="12" rx="3.8" fill="#2ca02c"/><text x="61.8" y="992.7" font-size="12" fill="#50575f" textLength="56.8" lengthAdjust="spacingAndGlyphs">CPUUsage</text><rect x="128.2" y="982.1" width="12" height="12" rx="3.8" fill="#95a5a6"/><text x="143.9" y="992.7" font-size="12" fill="#50575f" textLength="136.3" lengthAdjust="spacingAndGlyphs">Anomaly Detection Band</text></svg></section>
<section class="panel" style="left:832px;top:681px;width:816px;height:327px"><svg class="pv" width="816" height="327" viewBox="832 682 816 327"><text x="843.8" y="704" font-size="14" fill="#16191f" textLength="92.3" lengthAdjust="spacingAndGlyphs">MemoryUsage</text><g stroke="#444e5c" fill="none" stroke-width="2"><circle cx="1581" cy="699" r="7"/></g><path d="M1583.4 695.1L1582.7 700L1578.6 702.9L1579.3 698Z" fill="#444e5c" fill-rule="evenodd"/><circle cx="1581" cy="699" r="0.8" fill="#e8eaec"/><g stroke="#444e5c" fill="none" stroke-width="2"><circle cx="1607" cy="699" r="7"/><path d="M1607 698.2V703" /></g><rect x="1606" y="694.8" width="2" height="2" fill="#444e5c"/><circle cx="1633" cy="693.5" r="1.6" fill="#444e5c"/><circle cx="1633" cy="699" r="1.6" fill="#444e5c"/><circle cx="1633" cy="704.5" r="1.6" fill="#444e5c"/><defs><clipPath id="cm"><rect x="880" y="760" width="760" height="187"/></clipPath></defs><text x="846.9" y="745" font-size="12" fill="#50575f" textLength="41.9" lengthAdjust="spacingAndGlyphs">Percent</text><path d="M880 801H1618" stroke="#eaeaea" stroke-width="1.1"/><text x="876.4" y="806" font-size="12" fill="#16191f" text-anchor="end">45.0</text><path d="M880 850.2H1618" stroke="#eaeaea" stroke-width="1.1"/><text x="876.4" y="855.2" font-size="12" fill="#16191f" text-anchor="end">40.0</text><path d="M880 899.5H1618" stroke="#eaeaea" stroke-width="1.1"/><text x="876.4" y="904.5" font-size="12" fill="#16191f" text-anchor="end">35.0</text><path d="M885 946.7H1618" stroke="#c3c3c3" stroke-width="1.6"/><path d="M919.51 947.5V953.2" stroke="#e6e6e6" stroke-width="1.1"/><text x="919.91" y="969.8" font-size="12" fill="#16191f" text-anchor="middle" textLength="32.9" lengthAdjust="spacingAndGlyphs">10/31</text><path d="M1024.23 947.5V953.2" stroke="#e6e6e6" stroke-width="1.1"/><text x="1024.63" y="969.8" font-size="12" fill="#16191f" text-anchor="middle" textLength="32.9" lengthAdjust="spacingAndGlyphs">11/01</text><path d="M1128.94 947.5V953.2" stroke="#e6e6e6" stroke-width="1.1"/><text x="1129.34" y="969.8" font-size="12" fill="#16191f" text-anchor="middle" textLength="32.9" lengthAdjust="spacingAndGlyphs">11/02</text><path d="M1234.48 947.5V953.2" stroke="#e6e6e6" stroke-width="1.1"/><text x="1234.88" y="969.8" font-size="12" fill="#16191f" text-anchor="middle" textLength="32.9" lengthAdjust="spacingAndGlyphs">11/03</text><path d="M1343.56 947.5V953.2" stroke="#e6e6e6" stroke-width="1.1"/><text x="1343.96" y="969.8" font-size="12" fill="#16191f" text-anchor="middle" textLength="32.9" lengthAdjust="spacingAndGlyphs">11/04</text><path d="M1447.53 947.5V953.2" stroke="#e6e6e6" stroke-width="1.1"/><text x="1447.93" y="969.8" font-size="12" fill="#16191f" text-anchor="middle" textLength="32.9" lengthAdjust="spacingAndGlyphs">11/05</text><path d="M1552.25 947.5V953.2" stroke="#e6e6e6" stroke-width="1.1"/><text x="1552.65" y="969.8" font-size="12" fill="#16191f" text-anchor="middle" textLength="32.9" lengthAdjust="spacingAndGlyphs">11/06</text><path d="M984.89 810.15L989.86 822.32L993.73 874.29L997.88 873L1002.86 873L1011.7 870.97L1015.85 868.21L1020 860.47L1028.29 863.23L1032.99 862L1037.97 862L1042.11 859.92L1046.26 859L1060.08 859L1064.23 860L1068.38 860L1077.23 857.7L1081.1 767.02L1085.8 862.4L1089.94 859.92L1093.26 861L1112.61 861L1115.93 859.92L1120.91 862L1133.9 862L1138.05 877.89L1142.2 882.03L1147.17 879.82L1151.32 878.72L1155.47 877.89L1160.17 880L1165.14 880L1169.29 879L1185.88 879L1190.02 877.61L1198.32 876L1232 876L1247.21 876L1251.35 874L1273.47 874L1277.62 875L1281.76 875L1285.91 873.74L1290.06 874.84L1294.2 873.74L1299.18 871.53L1303.33 873L1313.56 873L1317.7 874L1326 874L1330.15 873L1339.82 873L1343.97 872L1352.26 872L1356.41 874L1360.56 874L1368.85 871.8L1373 873L1377.97 873L1382.12 880L1386.82 880L1390.97 879L1400.09 879L1404.24 877.61L1413.09 880L1417.23 880L1425.53 873.19L1430.23 871.8L1435.2 872.91L1443.5 871L1460.91 871L1465.06 869L1491.88 869L1496.03 867.93L1500.17 868.76L1504.87 868L1509.02 868L1521.74 870.97L1525.88 869.87L1535.01 872L1539.15 872L1544.13 871L1548.55 871L1552.7 871.8L1556.85 875L1561 875L1565.97 873.74L1569.84 872L1587.26 872L1591.41 873L1595.83 873L1600.81 890.88L1604.95 892.82L1609.1 893.92L1614.08 890.88" fill="none" stroke="#7d7426" stroke-width="1.9" stroke-linejoin="miter" stroke-miterlimit="2.5" stroke-opacity="0.85"/><path d="M984.89 810.15L989.86 822.32L993.73 874.29L997.88 873L1002.86 873L1011.7 870.97L1015.85 868.21L1020 860.47L1028.29 863.23L1032.99 862L1037.97 862L1042.11 859.92L1046.26 859L1060.08 859L1064.23 860L1068.38 860L1077.23 857.7L1081.1 767.02L1085.8 862.4L1089.94 859.92L1093.26 861L1112.61 861L1115.93 859.92L1120.91 862L1133.9 862L1138.05 877.89L1142.2 882.03L1147.17 879.82L1151.32 878.72L1155.47 877.89L1160.17 880L1165.14 880L1169.29 879L1185.88 879L1190.02 877.61L1198.32 876L1232 876L1247.21 876L1251.35 874L1273.47 874L1277.62 875L1281.76 875L1285.91 873.74L1290.06 874.84L1294.2 873.74L1299.18 871.53L1303.33 873L1313.56 873L1317.7 874L1326 874L1330.15 873L1339.82 873L1343.97 872L1352.26 872L1356.41 874L1360.56 874L1368.85 871.8L1373 873L1377.97 873L1382.12 880L1386.82 880L1390.97 879L1400.09 879L1404.24 877.61L1413.09 880L1417.23 880L1425.53 873.19L1430.23 871.8L1435.2 872.91L1443.5 871L1460.91 871L1465.06 869L1491.88 869L1496.03 867.93L1500.17 868.76L1504.87 868L1509.02 868L1521.74 870.97L1525.88 869.87L1535.01 872L1539.15 872L1544.13 871L1548.55 871L1552.7 871.8L1556.85 875L1561 875L1565.97 873.74L1569.84 872L1587.26 872L1591.41 873L1595.83 873L1600.81 890.88L1604.95 892.82L1609.1 893.92L1614.08 890.88" fill="none" stroke="#2ba335" stroke-width="1.0" stroke-linejoin="miter" stroke-miterlimit="2.5"/><path d="M997.88 873L1002.86 873M1032.99 862L1037.97 862M1046.26 859L1060.08 859M1064.23 860L1068.38 860M1093.26 861L1112.61 861M1120.91 862L1133.9 862M1160.17 880L1165.14 880M1169.29 879L1185.88 879M1198.32 876L1232 876L1247.21 876M1251.35 874L1273.47 874M1277.62 875L1281.76 875M1303.33 873L1313.56 873M1317.7 874L1326 874M1330.15 873L1339.82 873M1343.97 872L1352.26 872M1356.41 874L1360.56 874M1373 873L1377.97 873M1382.12 880L1386.82 880M1390.97 879L1400.09 879M1413.09 880L1417.23 880M1443.5 871L1460.91 871M1465.06 869L1491.88 869M1504.87 868L1509.02 868M1535.01 872L1539.15 872M1544.13 871L1548.55 871M1556.85 875L1561 875M1569.84 872L1587.26 872M1591.41 873L1595.83 873" fill="none" stroke="#4f7f1e" stroke-width="2" stroke-linejoin="round"/><g clip-path="url(#cm)"><circle cx="915.22" cy="946.77" r="2.0" fill="#4e8c2b"/></g><rect x="870.1" y="982.1" width="12" height="12" rx="3.8" fill="#2ca02c"/><text x="885.8" y="992.7" font-size="12" fill="#50575f" textLength="79" lengthAdjust="spacingAndGlyphs">MemoryUsage</text><rect x="974.4" y="982.1" width="12" height="12" rx="3.8" fill="#95a5a6"/><text x="990.1" y="992.7" font-size="12" fill="#50575f" textLength="164.1" lengthAdjust="spacingAndGlyphs">ANOMALY_DETECTION_BAND</text></svg></section>
<section class="panel" style="left:1656px;top:681px;width:816px;height:327px"><svg class="pv" width="816" height="327" viewBox="1656 682 816 327"><text x="1667.8" y="704" font-size="14" fill="#16191f" textLength="129.3" lengthAdjust="spacingAndGlyphs">Volume Information</text><g stroke="#444e5c" fill="none" stroke-width="2"><circle cx="2405" cy="699" r="7"/></g><path d="M2407.4 695.1L2406.7 700L2402.6 702.9L2403.3 698Z" fill="#444e5c" fill-rule="evenodd"/><circle cx="2405" cy="699" r="0.8" fill="#e8eaec"/><g stroke="#444e5c" fill="none" stroke-width="2"><circle cx="2431" cy="699" r="7"/><path d="M2431 698.2V703" /></g><rect x="2430" y="694.8" width="2" height="2" fill="#444e5c"/><circle cx="2457" cy="693.5" r="1.6" fill="#444e5c"/><circle cx="2457" cy="699" r="1.6" fill="#444e5c"/><circle cx="2457" cy="704.5" r="1.6" fill="#444e5c"/><defs><clipPath id="cv"><rect x="1700" y="760" width="760" height="187.3"/></clipPath></defs><text x="1670.9" y="745" font-size="12" fill="#50575f" textLength="41.9" lengthAdjust="spacingAndGlyphs">Percent</text><path d="M1705.7 795.2H2442" stroke="#eaeaea" stroke-width="1.1"/><text x="1702.1" y="800.2" font-size="12" fill="#16191f" text-anchor="end">80.00</text><path d="M1705.7 836.6H2442" stroke="#eaeaea" stroke-width="1.1"/><text x="1702.1" y="841.6" font-size="12" fill="#16191f" text-anchor="end">60.00</text><path d="M1705.7 878.1H2442" stroke="#eaeaea" stroke-width="1.1"/><text x="1702.1" y="883.1" font-size="12" fill="#16191f" text-anchor="end">40.00</text><path d="M1705.7 919.6H2442" stroke="#eaeaea" stroke-width="1.1"/><text x="1702.1" y="924.6" font-size="12" fill="#16191f" text-anchor="end">20.00</text><path d="M1710.7 946.7H2442" stroke="#c3c3c3" stroke-width="1.6"/><path d="M1745.13 947.5V953.2" stroke="#e6e6e6" stroke-width="1.1"/><text x="1745.53" y="969.8" font-size="12" fill="#16191f" text-anchor="middle" textLength="32.9" lengthAdjust="spacingAndGlyphs">10/31</text><path d="M1849.6 947.5V953.2" stroke="#e6e6e6" stroke-width="1.1"/><text x="1850" y="969.8" font-size="12" fill="#16191f" text-anchor="middle" textLength="32.9" lengthAdjust="spacingAndGlyphs">11/01</text><path d="M1954.07 947.5V953.2" stroke="#e6e6e6" stroke-width="1.1"/><text x="1954.47" y="969.8" font-size="12" fill="#16191f" text-anchor="middle" textLength="32.9" lengthAdjust="spacingAndGlyphs">11/02</text><path d="M2059.37 947.5V953.2" stroke="#e6e6e6" stroke-width="1.1"/><text x="2059.77" y="969.8" font-size="12" fill="#16191f" text-anchor="middle" textLength="32.9" lengthAdjust="spacingAndGlyphs">11/03</text><path d="M2168.2 947.5V953.2" stroke="#e6e6e6" stroke-width="1.1"/><text x="2168.6" y="969.8" font-size="12" fill="#16191f" text-anchor="middle" textLength="32.9" lengthAdjust="spacingAndGlyphs">11/04</text><path d="M2271.93 947.5V953.2" stroke="#e6e6e6" stroke-width="1.1"/><text x="2272.33" y="969.8" font-size="12" fill="#16191f" text-anchor="middle" textLength="32.9" lengthAdjust="spacingAndGlyphs">11/05</text><path d="M2376.4 947.5V953.2" stroke="#e6e6e6" stroke-width="1.1"/><text x="2376.8" y="969.8" font-size="12" fill="#16191f" text-anchor="middle" textLength="32.9" lengthAdjust="spacingAndGlyphs">11/06</text><path d="M1810.82 775.04L1814.97 777.81L1819.94 778.91L1902.06 778.91L1906.76 767.02L1910.9 772L1915.88 773.11L1920.03 772L1924.17 773.11L1958.73 773.11L1963.15 774.21L2097.47 774.21L2107.15 778.08L2424.81 778.08L2433.1 773.93L2438.08 773.93" fill="none" stroke="#1f77b4" stroke-width="1.6" stroke-linejoin="miter" stroke-miterlimit="2.5"/><circle cx="1741.43" cy="769.79" r="1.9" fill="#1f77b4"/><path d="M1810.82 946.73L2438.08 946.73" fill="none" stroke="#ff7f0e" stroke-width="1.7" stroke-linejoin="miter" stroke-miterlimit="2.5"/><g clip-path="url(#cv)"><circle cx="1741.43" cy="946.17" r="2.3" fill="#ff7f0e"/></g><rect x="1694.1" y="982.1" width="12" height="12" rx="3.8" fill="#1f77b4"/><text x="1709.8" y="992.7" font-size="12" fill="#50575f" textLength="123.7" lengthAdjust="spacingAndGlyphs">RootVolumeDiskUsage</text><rect x="1843.1" y="982.1" width="12" height="12" rx="3.8" fill="#ff7f0e"/><text x="1858.8" y="992.7" font-size="12" fill="#50575f" textLength="123.2" lengthAdjust="spacingAndGlyphs">UserVolumeDiskUsage</text></svg></section>
</main>
</body>
</html>
